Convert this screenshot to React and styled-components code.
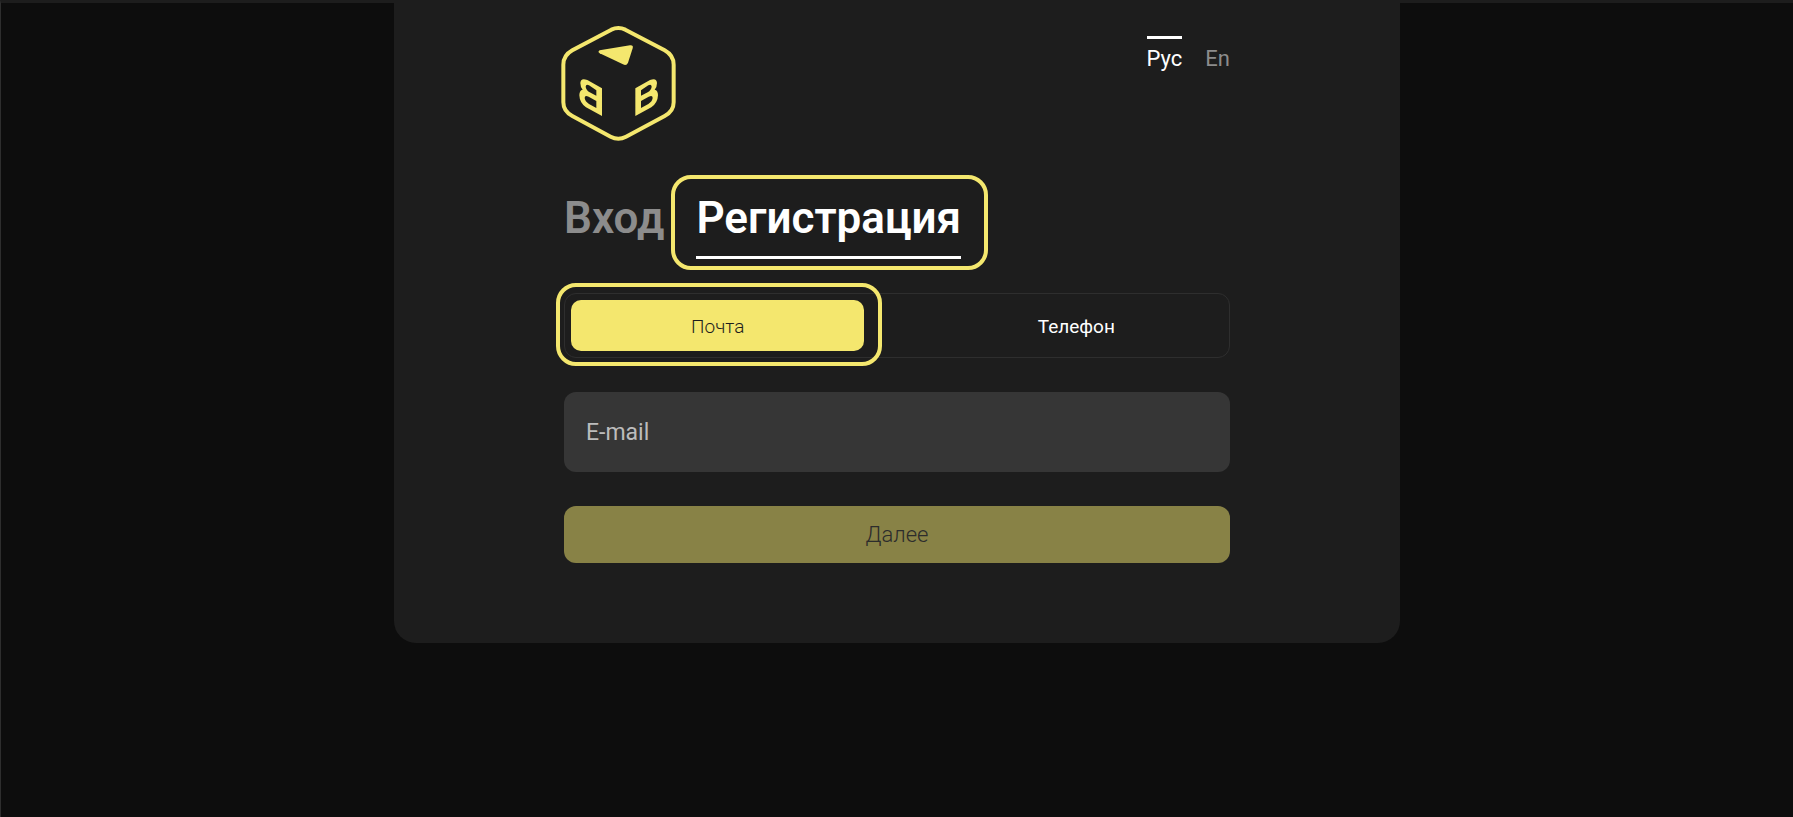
import React, { useState } from "react";
import styled, { createGlobalStyle, ThemeProvider } from "styled-components";

const theme = {
  page: "#0d0d0d",
  card: "#1d1d1d",
  field: "#363636",
  line: "#2e2e2e",
  accent: "#f4e76e",
  accentMuted: "#888246",
  text: "#ffffff",
  muted: "#8c8c8c",
};

const GlobalStyle = createGlobalStyle`
  *, *::before, *::after { box-sizing: border-box; }
  body {
    margin: 0;
    background: ${theme.page};
    font-family: Roboto, "Liberation Sans", sans-serif;
  }
  button, input { font: inherit; }
`;

const Page = styled.div`
  min-height: 100vh;
  border-top: 3px solid ${(p) => p.theme.card};
  border-left: 1px solid ${(p) => p.theme.line};
  color: ${(p) => p.theme.text};
`;

const Card = styled.main`
  max-width: 1006px;
  margin: 0 auto;
  padding: 22px 170px 80px;
  background: ${(p) => p.theme.card};
  border-radius: 0 0 22px 22px;

  @media (max-width: 900px) {
    padding-left: 32px;
    padding-right: 32px;
  }
`;

const Header = styled.header`
  display: flex;
  justify-content: space-between;
  align-items: flex-start;
  margin-left: -4px;
`;

const Logo = styled.svg`
  display: block;
  width: 117px;
  height: 117px;
`;

const Languages = styled.nav`
  display: flex;
  gap: 23px;
  padding-top: 11px;
`;

const Language = styled.button`
  padding: 6px 0 0;
  border: 0;
  border-top: 3px solid ${(p) => (p.$active ? p.theme.text : "transparent")};
  background: none;
  color: ${(p) => (p.$active ? p.theme.text : p.theme.muted)};
  font-size: 22px;
  line-height: 28px;
  cursor: pointer;
`;

const Modes = styled.nav`
  display: flex;
  gap: 32px;
  margin-top: 50px;
`;

const Highlight = styled.span`
  position: relative;
  display: flex;

  &::after {
    content: "";
    position: absolute;
    inset: ${(p) => p.$inset};
    border: 4px solid ${(p) => p.theme.accent};
    border-radius: 20px;
    pointer-events: none;
  }
`;

const Mode = styled.button`
  padding: 0 0 11px;
  border: 0;
  border-bottom: 3px solid ${(p) => (p.$active ? p.theme.text : "transparent")};
  background: none;
  color: ${(p) => (p.$active ? p.theme.text : p.theme.muted)};
  font-size: 44px;
  font-weight: 600;
  line-height: 53px;
  cursor: pointer;
`;

const Methods = styled.div`
  display: flex;
  justify-content: space-between;
  margin-top: 34px;
  padding: 6px;
  border: 1px solid ${(p) => p.theme.line};
  border-radius: 12px;
`;

const MethodSlot = styled(Highlight)`
  width: 45%;
  &::after { display: ${(p) => (p.$active ? "block" : "none")}; }
`;

const Method = styled.button`
  flex: 1;
  height: 51px;
  padding: 2px 0 0;
  border: 0;
  border-radius: 10px;
  background: ${(p) => (p.$active ? p.theme.accent : "transparent")};
  color: ${(p) => (p.$active ? "#1d1d1d" : p.theme.text)};
  font-size: 19px;
  font-weight: ${(p) => (p.$active ? 300 : 400)};
  cursor: pointer;
`;

const Field = styled.input`
  display: block;
  width: 100%;
  height: 80px;
  margin-top: 34px;
  padding: 0 22px;
  border: 0;
  border-radius: 12px;
  outline: 0;
  background: ${(p) => p.theme.field};
  color: ${(p) => p.theme.text};
  font-size: 23px;

  &::placeholder { color: #bcbcbc; opacity: 1; }
`;

const Submit = styled.button`
  display: block;
  width: 100%;
  height: 57px;
  margin-top: 34px;
  border: 0;
  border-radius: 12px;
  background: ${(p) => p.theme.accentMuted};
  color: #2c2c2c;
  font-size: 22px;
  font-weight: 300;
`;

const SideMark = "M286 235L330 210Q350 202 351 219Q351 231 344 239Q354 241 354 256Q353 279 334 292L286 318ZM303 241V257L323 247Q334 240 335 230Q334 221 325 226ZM303 273V294L325 282Q337 274 338 264Q338 254 326 260Z";

function BrandLogo() {
  return (
    <Logo viewBox="60 45 351 351" role="img" aria-label="BB">
      <path
        d="M214 59Q235 49 256 59L374 121Q401 136 401 164V277Q401 304 374 318L258 380Q235 392 212 380L97 318Q70 304 70 277V164Q70 136 97 121Z"
        fill="none"
        stroke={theme.accent}
        strokeWidth="12"
      />
      <path d="M179 121L270 106Q281 105 278 115L264 158Q260 168 249 163L179 130Q172 125 179 121Z" fill={theme.accent} />
      <path d={SideMark} fill={theme.accent} fillRule="evenodd" />
      <path d={SideMark} fill={theme.accent} fillRule="evenodd" transform="translate(472 0) scale(-1 1)" />
    </Logo>
  );
}

export default function App() {
  const [language, setLanguage] = useState("Рус");
  const [method, setMethod] = useState("Почта");

  return (
    <ThemeProvider theme={theme}>
      <GlobalStyle />
      <Page>
        <Card>
          <Header>
            <BrandLogo />
            <Languages aria-label="Язык">
              {["Рус", "En"].map((name) => (
                <Language key={name} type="button" $active={language === name} onClick={() => setLanguage(name)}>
                  {name}
                </Language>
              ))}
            </Languages>
          </Header>
          <Modes>
            <Mode type="button">Вход</Mode>
            <Highlight $inset="-17px -27px -11px -25px">
              <Mode type="button" $active>Регистрация</Mode>
            </Highlight>
          </Modes>
          <Methods>
            {["Почта", "Телефон"].map((name) => (
              <MethodSlot key={name} $active={method === name} $inset="-17px -18px -15px -15px">
                <Method type="button" $active={method === name} onClick={() => setMethod(name)}>
                  {name}
                </Method>
              </MethodSlot>
            ))}
          </Methods>
          <Field type="email" placeholder="E-mail" aria-label="E-mail" />
          <Submit type="button" disabled>Далее</Submit>
        </Card>
      </Page>
    </ThemeProvider>
  );
}
